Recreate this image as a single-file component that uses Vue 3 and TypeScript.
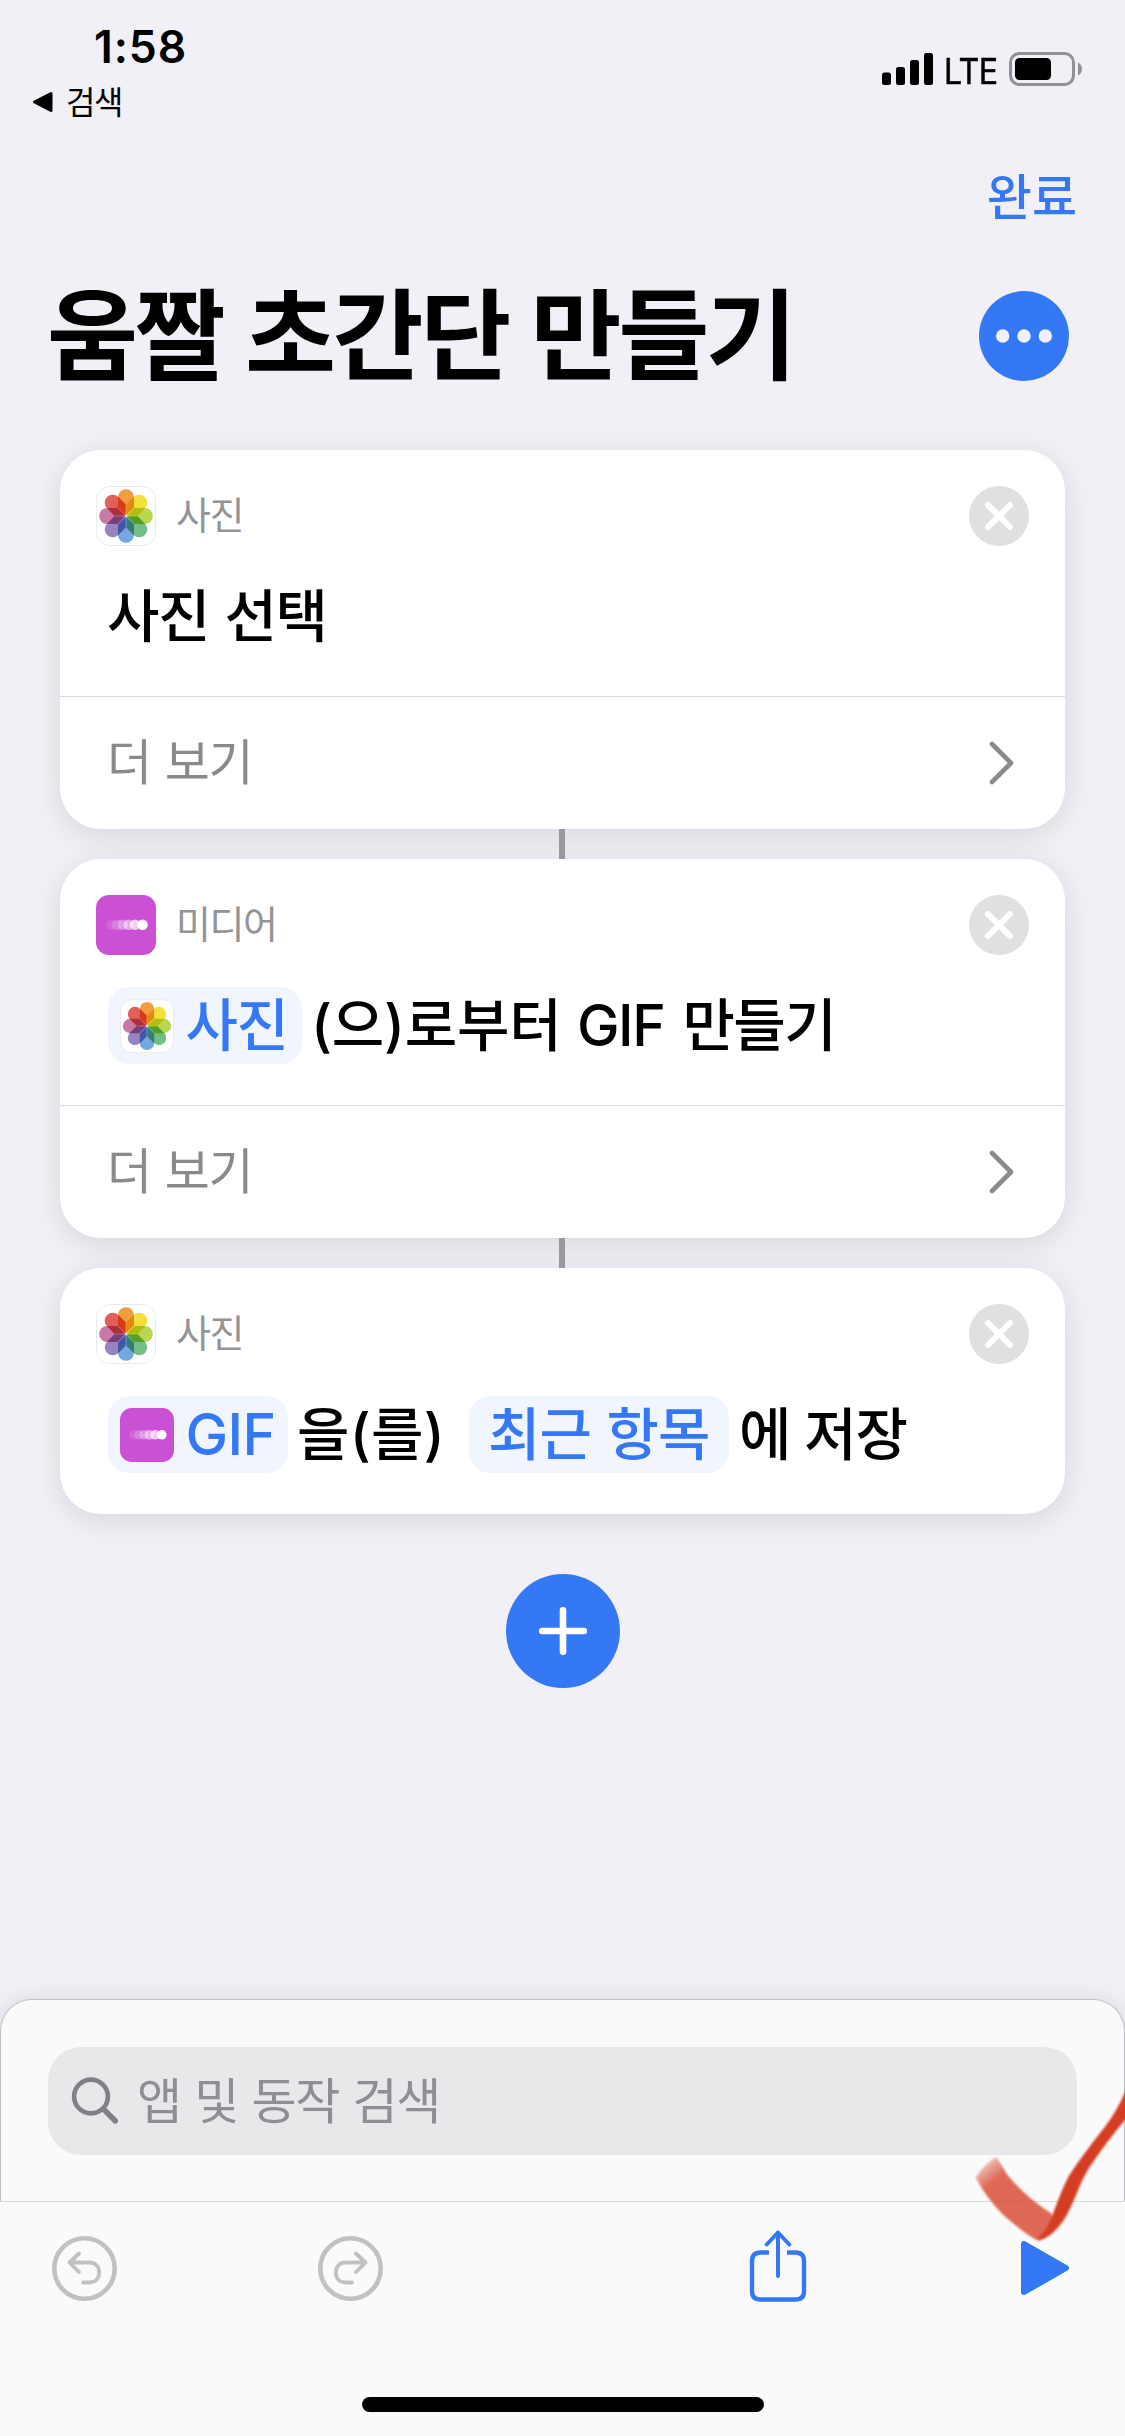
<script setup lang="ts">
import { defineComponent, h } from 'vue'

const petals = ['#f09c40', '#f1e03c', '#b9d64f', '#74bd86', '#72a8de', '#9684c0', '#c67aa5', '#e2605a']
const trail = [
  { x: 15.5, o: 0.12 },
  { x: 21, o: 0.2 },
  { x: 26.5, o: 0.34 },
  { x: 32.5, o: 0.5 },
  { x: 39, o: 0.72 },
  { x: 46.5, o: 1 },
]

type IconName = 'photos' | 'media'

const AppIcon = defineComponent({
  props: { name: { type: String, required: true } },
  setup(props) {
    return () =>
      props.name === 'photos'
        ? h('svg', { viewBox: '0 0 60 60', style: 'display:block;isolation:isolate' }, [
            h('rect', { x: 0.5, y: 0.5, width: 59, height: 59, rx: 13, fill: '#fff', stroke: '#e9e9eb' }),
            ...petals.map((fill, i) =>
              h('path', {
                d: 'M30 29.3L22 21.5V11.2A8 8 0 0 1 38 11.2V21.5Z',
                fill,
                transform: `rotate(${i * 45} 30 30)`,
                style: 'mix-blend-mode:multiply',
              }),
            ),
          ])
        : h('svg', { viewBox: '0 0 60 60', style: 'display:block' }, [
            h('rect', { width: 60, height: 60, rx: 13, fill: '#ca51d3' }),
            ...trail.map((d) => h('circle', { cx: d.x, cy: 29.8, r: 5.3, fill: '#fff', opacity: d.o })),
          ])
  },
})

interface Part {
  kind: 'text' | 'chip'
  text: string
  cls: string
  icon?: IconName
}
interface Action {
  app: string
  icon: IconName
  parts: Part[]
  more: boolean
}

const actions: Action[] = [
  { app: '사진', icon: 'photos', more: true, parts: [{ kind: 'text', text: '사진 선택', cls: 'pick' }] },
  {
    app: '미디어', icon: 'media', more: true,
    parts: [
      { kind: 'chip', text: '사진', cls: 'chip-photo', icon: 'photos' },
      { kind: 'text', text: '(으)로부터', cls: 'from' },
      { kind: 'text', text: 'GIF 만들기', cls: 'make' },
    ],
  },
  {
    app: '사진', icon: 'photos', more: false,
    parts: [
      { kind: 'chip', text: 'GIF', cls: 'chip-gif', icon: 'media' },
      { kind: 'text', text: '을(를)', cls: 'object' },
      { kind: 'chip', text: '최근 항목', cls: 'chip-album' },
      { kind: 'text', text: '에 저장', cls: 'save' },
    ],
  },
]
</script>

<template>
  <div class="screen">
    <header class="status">
      <div class="status-left">
        <div class="time">1:58</div>
        <div class="back">
          <svg width="22" height="22" viewBox="0 0 22 22"><path d="M19 2.5V19.5L2.5 11Z" fill="#000" stroke="#000" stroke-width="3" stroke-linejoin="round" /></svg>
          <span>검색</span>
        </div>
      </div>
      <div class="status-right">
        <svg width="51" height="34" viewBox="0 0 51 34">
          <rect x="0" y="20.5" width="9" height="12.5" rx="2.5" />
          <rect x="14" y="15" width="9" height="18" rx="2.5" />
          <rect x="28" y="8" width="9" height="25" rx="2.5" />
          <rect x="42" y="1" width="9" height="32" rx="2.5" />
        </svg>
        <span class="lte">LTE</span>
        <svg width="74" height="34" viewBox="0 0 74 34">
          <rect x="1.5" y="1.5" width="63" height="31" rx="9" fill="none" stroke="#929197" stroke-width="3" />
          <rect x="6" y="6" width="36" height="22" rx="4.5" />
          <path d="M69 10.5Q73 12.5 73 17Q73 21.5 69 23.5Z" fill="#929197" />
        </svg>
      </div>
    </header>

    <nav class="nav"><span class="done">완료</span></nav>

    <div class="title-row">
      <h1>움짤 초간단 만들기</h1>
      <svg class="dots" width="90" height="90" viewBox="0 0 90 90">
        <circle cx="45" cy="45" r="45" fill="#3478f6" />
        <g fill="#f1f0f6"><circle cx="23.7" cy="45" r="6.7" /><circle cx="45" cy="45" r="6.7" /><circle cx="66.3" cy="45" r="6.7" /></g>
      </svg>
    </div>

    <main class="flow">
      <template v-for="(a, i) in actions" :key="i">
        <div v-if="i > 0" class="link"></div>
        <section class="card">
          <div class="card-head">
            <AppIcon :name="a.icon" class="icon" />
            <span class="app">{{ a.app }}</span>
            <svg class="close" width="60" height="60" viewBox="0 0 60 60">
              <circle cx="30" cy="30" r="30" fill="#e0e0e2" />
              <path d="M19 19L41 41M41 19L19 41" stroke="#fff" stroke-width="6" stroke-linecap="round" />
            </svg>
          </div>
          <div class="card-body">
            <span v-for="(p, j) in a.parts" :key="j" :class="[p.kind, p.cls]">
              <AppIcon v-if="p.icon" :name="p.icon" class="chip-icon" />
              <span>{{ p.text }}</span>
            </span>
          </div>
          <div v-if="a.more" class="more">
            <span>더 보기</span>
            <svg width="26" height="44" viewBox="0 0 26 44"><path d="M3 3L22 22L3 41" fill="none" stroke="#8a8a8e" stroke-width="4.6" stroke-linecap="round" stroke-linejoin="round" /></svg>
          </div>
        </section>
      </template>
      <svg class="add" width="115" height="115" viewBox="0 0 115 115">
        <circle cx="58" cy="57" r="57" fill="#3478f6" />
        <path d="M58 36.2V77.8M37.2 57H78.8" stroke="#fff" stroke-width="6.6" stroke-linecap="round" />
      </svg>
    </main>

    <footer class="bottom">
      <div class="drawer">
        <div class="search">
          <svg width="50" height="50" viewBox="0 0 50 50" fill="none" stroke="#808085" stroke-linecap="round">
            <circle cx="21" cy="20.5" r="16.9" stroke-width="4.6" />
            <path d="M33.500 33L45.300 45" stroke-width="5.4" />
          </svg>
          <span>앱 및 동작 검색</span>
        </div>
      </div>
      <div class="toolbar">
        <svg class="undo" width="65" height="65" viewBox="0 0 65 65" fill="none" stroke="#c1c1c1" stroke-linecap="round" stroke-linejoin="round">
          <circle cx="32.5" cy="32.5" r="30.2" stroke-width="4.6" />
          <path d="M27 17.5L17.5 26.5L27 36M17.5 26.5H37C43.5 26.5 47.2 30.5 47.2 36.5C47.2 42.5 43.5 46.5 37 46.5H31" stroke-width="3.8" />
        </svg>
        <svg class="redo" width="65" height="65" viewBox="0 0 65 65" fill="none" stroke="#c1c1c1" stroke-linecap="round" stroke-linejoin="round">
          <circle cx="32.5" cy="32.5" r="30.2" stroke-width="4.6" />
          <path d="M38 17.5L47.5 26.5L38 36M47.5 26.5H28C21.5 26.5 17.8 30.5 17.8 36.5C17.8 42.5 21.5 46.5 28 46.5H34" stroke-width="3.8" />
        </svg>
        <svg class="share" width="58" height="74" viewBox="0 0 58 74" fill="none" stroke="#3478f6" stroke-width="4.4">
          <path d="M20 23.5H11.5Q3 23.5 3 32V62.5Q3 70.5 11.5 70.5H46.5Q55 70.5 55 62.5V32Q55 23.5 46.5 23.5H38" />
          <path d="M29 47V3.5M17.7 15.5L29 3.5L40.3 15.5" stroke-width="4" stroke-linecap="round" stroke-linejoin="round" />
        </svg>
        <svg class="play" width="49" height="54" viewBox="0 0 49 54"><path d="M4 3V51L46 27Z" fill="#3478f6" stroke="#3478f6" stroke-width="6" stroke-linejoin="round" /></svg>
      </div>
      <div class="home"></div>
    </footer>

    <svg class="mark" width="185" height="260" viewBox="0 0 555 780">
      <defs>
        <linearGradient id="fade" gradientUnits="userSpaceOnUse" x1="130" y1="312" x2="168" y2="358">
          <stop offset="0" stop-color="#d63f26" stop-opacity="0.3" />
          <stop offset="1" stop-color="#d63f26" stop-opacity="0.78" />
        </linearGradient>
        <filter id="soft" x="-5%" y="-5%" width="110%" height="110%"><feGaussianBlur stdDeviation="2.5" /></filter>
      </defs>
      <g filter="url(#soft)">
        <path d="M107 353Q128 318 168 291Q180 305 200 342Q250 405 333 460L350 495Q325 530 298 542Q270 535 190 465Q140 415 107 353Z" fill="url(#fade)" />
        <path d="M575 65L555 97Q530 155 495 200Q420 295 385 350Q365 390 340 458Q325 505 300 528Q290 536 296 541Q335 535 375 475Q392 445 412 396Q425 360 447 324Q500 245 555 180L575 160Z" fill="#d43d23" />
      </g>
    </svg>
  </div>
</template>

<style>
body { margin: 0; background: #f1f0f6; }
</style>

<style scoped>
.screen {
  position: relative;
  display: flex;
  flex-direction: column;
  width: 1125px;
  height: 2436px;
  overflow: hidden;
  background: #f1f0f6;
  color: #000;
  font-family: Inter, "Noto Sans CJK KR", sans-serif;
  white-space: nowrap;
}
svg { display: block; flex: none; }
.status { display: flex; justify-content: space-between; height: 132px; flex: none; }
.status-left { padding: 20px 0 0 32px; }
.time { margin-left: 62px; padding-top: 1px; font-size: 44.5px; font-weight: 600; line-height: 53px; letter-spacing: 0.9px; }
.back { display: flex; align-items: center; gap: 12px; margin-top: 7px; height: 42px; font-size: 32px; line-height: 42px; letter-spacing: -1.5px; }
.back span { padding-top: 1px; }
.status-right { display: flex; align-items: flex-start; padding: 52px 42px 0 0; }
.lte { width: 52px; margin: 0 13px 0 11px; font-size: 35px; line-height: 38px; letter-spacing: -0.6px; transform: scaleX(0.92); transform-origin: 0 50%; -webkit-text-stroke: 0.5px #000; }
.nav { display: flex; justify-content: flex-end; align-items: center; height: 130px; padding-right: 48px; flex: none; }
.done { padding-top: 2px; color: #3478f6; font-size: 49px; font-weight: 500; line-height: 60px; letter-spacing: 0; }
.title-row { display: flex; justify-content: space-between; align-items: center; height: 148px; padding: 0 56px 0 47px; flex: none; }
h1 { margin: 0; font-size: 99px; font-weight: 700; line-height: 120px; letter-spacing: -3.4px; word-spacing: 2.5px; }
.flow { display: flex; flex-direction: column; align-items: center; padding: 40px 60px 0; }
.card { width: 1005px; border-radius: 41px; background: #fff; box-shadow: 0 6px 30px rgba(0, 0, 20, 0.11); }
.link { position: relative; z-index: 1; width: 6px; height: 30px; margin-right: 1px; background: #98989e; }
.card-head { display: flex; align-items: center; padding: 36px 36px 0; }
.icon { width: 60px; height: 60px; }
.app { margin: -2px 0 0 20px; color: #949497; font-size: 38px; line-height: 60px; letter-spacing: -1.5px; }
.close { margin-left: auto; }
.card-body { display: flex; align-items: center; height: 77px; padding: 32px 48px 41px; font-size: 57px; font-weight: 500; line-height: 77px; letter-spacing: -1.5px; word-spacing: 1.5px; }
.pick { margin-left: -1px; word-spacing: 2px; }
.chip { display: flex; align-items: center; box-sizing: border-box; height: 77px; padding-left: 12px; border-radius: 21px; background: #f0f5fe; color: #3478f6; }
.chip-icon { width: 54px; height: 54px; margin-right: 11.5px; }
.chip-photo { width: 194px; }
.chip-gif { width: 180px; letter-spacing: -0.6px; }
.chip-album { width: 260px; margin-left: 30px; padding-left: 19px; letter-spacing: -1px; }
.from { width: 260px; margin-left: 9px; letter-spacing: -0.2px; }
.make { margin-left: 6px; letter-spacing: -1.5px; word-spacing: 4.5px; }
.object { width: 142px; margin-left: 9px; letter-spacing: 0.3px; }
.save { margin-left: 10px; letter-spacing: -1.2px; word-spacing: 0; }
.more { display: flex; align-items: center; justify-content: space-between; height: 132px; padding: 0 50px 0 47px; border-top: 1px solid #d9d9dc; color: #8a8a8e; font-size: 49px; line-height: 60px; letter-spacing: -1.5px; word-spacing: 2px; }
.add { margin-top: 60px; }
.bottom { display: flex; flex-direction: column; height: 437px; margin-top: auto; flex: none; }
.drawer { box-sizing: border-box; height: 202px; padding: 47px 47px 0; border: 1px solid #c1c1c5; border-bottom: 0; border-radius: 32px 32px 0 0; background: #fafafa; box-shadow: 0 0 22px rgba(0, 0, 20, 0.1); }
.search { display: flex; align-items: center; height: 108px; padding-left: 22px; border-radius: 33px; background: #e8e8ea; color: #8e8e93; font-size: 49px; line-height: 60px; letter-spacing: -1.3px; word-spacing: 1px; }
.search span { margin-left: 17px; padding-top: 2px; }
.toolbar { position: relative; z-index: 1; display: flex; align-items: flex-start; box-sizing: border-box; height: 196px; padding: 0 56px 0 52px; border-top: 1px solid #d9d9dc; background: #fafafa; }
.undo, .redo { margin-top: 34px; }
.redo { margin-left: 201px; }
.share { margin-left: 366px; margin-top: 27px; }
.play { margin-left: auto; margin-top: 39px; }
.home { position: relative; z-index: 1; flex: 1; background: #fafafa; }
.home::before { content: ""; display: block; width: 402px; height: 15px; margin: 0 auto; border-radius: 8px; background: #000; }
.mark { position: absolute; z-index: 2; left: 940px; top: 2060px; }
</style>
